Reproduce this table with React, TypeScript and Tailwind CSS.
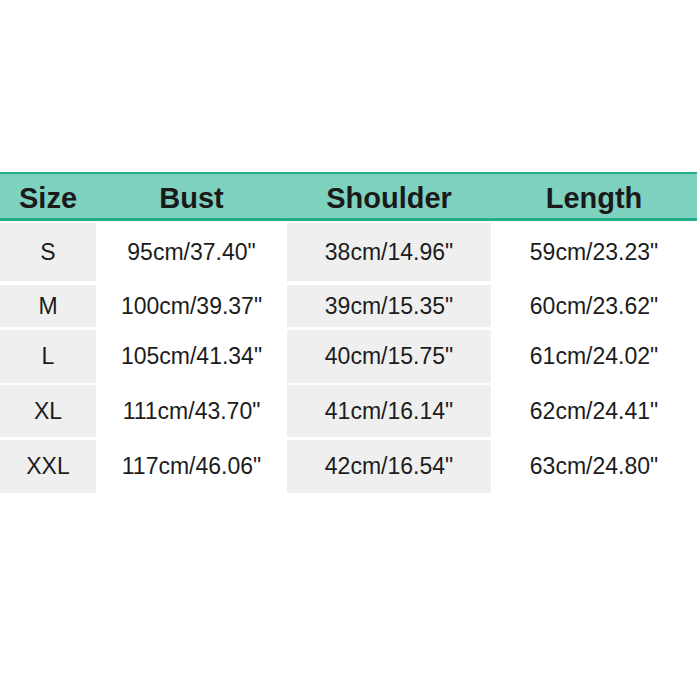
const rows = [
  { size: 'S', bust: '95cm/37.40"', shoulder: '38cm/14.96"', length: '59cm/23.23"', cls: 'mt-[2px] h-[58px]' },
  { size: 'M', bust: '100cm/39.37"', shoulder: '39cm/15.35"', length: '60cm/23.62"', cls: 'mt-[4px] h-[42px]' },
  { size: 'L', bust: '105cm/41.34"', shoulder: '40cm/15.75"', length: '61cm/24.02"', cls: 'mt-[3px] h-[53px]' },
  { size: 'XL', bust: '111cm/43.70"', shoulder: '41cm/16.14"', length: '62cm/24.41"', cls: 'mt-[2px] h-[52px]' },
  { size: 'XXL', bust: '117cm/46.06"', shoulder: '42cm/16.54"', length: '63cm/24.80"', cls: 'mt-[3px] h-[53px]' },
];

const cols = 'grid grid-cols-[96px_191px_204px_206px]';

export default function App() {
  return (
    <div className="h-[700px] w-[700px] bg-white pt-[172px] font-['Liberation_Sans',Arial,sans-serif]">
      <div className={`${cols} h-[49px] w-[697px] items-center border-t-2 border-b-[3px] border-[#1fae89] bg-[#80d2c0] pt-[3px] text-[29px] font-bold text-[#1a1a1a]`}>
        <div className="text-center">Size</div>
        <div className="text-center">Bust</div>
        <div className="text-center">Shoulder</div>
        <div className="text-center">Length</div>
      </div>
      {rows.map((r) => (
        <div key={r.size} className={`${cols} ${r.cls} w-[697px] text-[23px] text-[#1c1c1c]`}>
          <div className="flex items-center justify-center bg-[#efefef]">{r.size}</div>
          <div className="flex items-center justify-center bg-white">{r.bust}</div>
          <div className="flex items-center justify-center bg-[#efefef]">{r.shoulder}</div>
          <div className="flex items-center justify-center bg-white">{r.length}</div>
        </div>
      ))}
    </div>
  );
}
